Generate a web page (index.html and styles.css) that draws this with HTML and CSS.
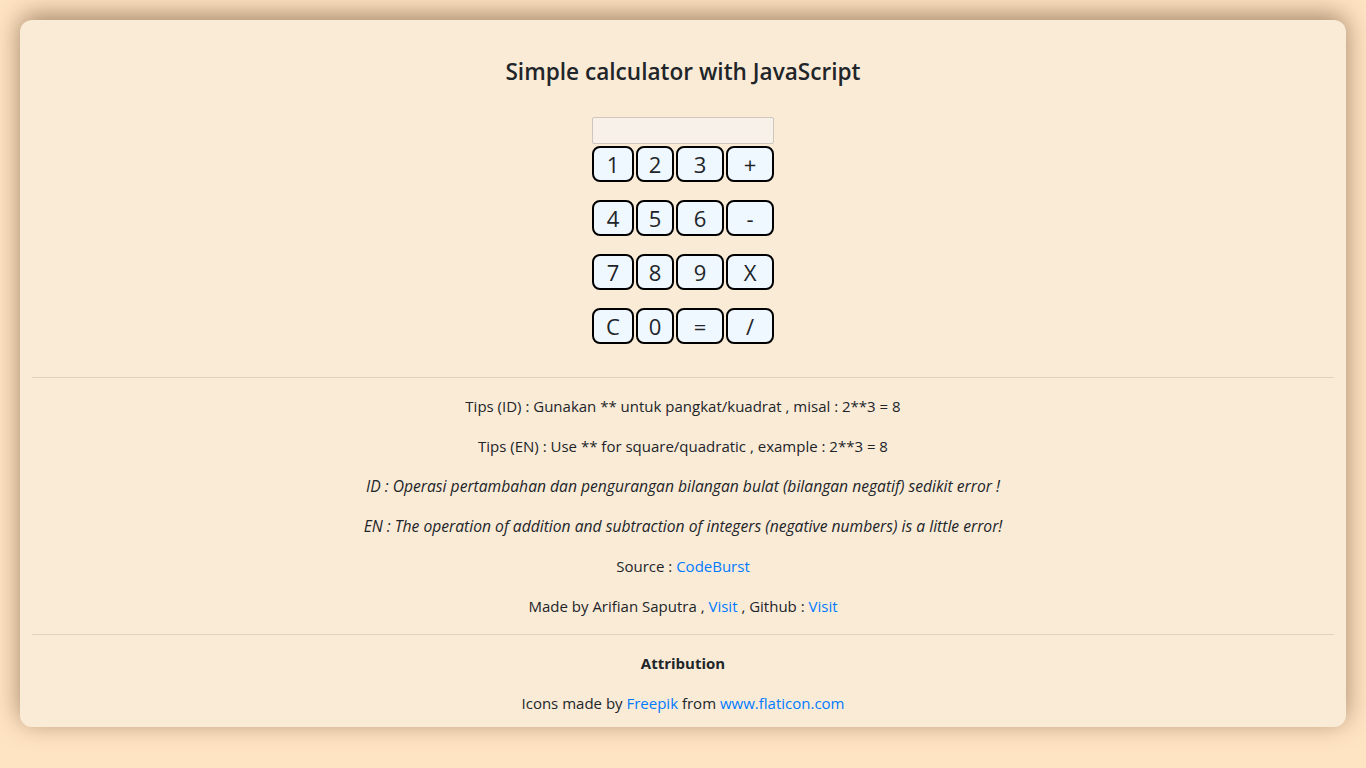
FILE: index.html
```html
<!DOCTYPE html>
<html lang="en">
<head>
<meta charset="utf-8">
<title>Simple calculator with JavaScript</title>
<link rel="stylesheet" href="styles.css">
</head>
<body>
<main class="card">
  <h1 class="title">Simple calculator with JavaScript</h1>
  <div class="calc">
    <input class="display" type="text">
    <div class="keys">
      <button class="key">1</button><button class="key">2</button><button class="key">3</button><button class="key">+</button>
      <button class="key">4</button><button class="key">5</button><button class="key">6</button><button class="key">-</button>
      <button class="key">7</button><button class="key">8</button><button class="key">9</button><button class="key">X</button>
      <button class="key">C</button><button class="key">0</button><button class="key">=</button><button class="key">/</button>
    </div>
  </div>
  <hr class="rule rule-top">
  <p class="line">Tips (ID) : Gunakan ** untuk pangkat/kuadrat , misal : 2**3 = 8</p>
  <p class="line">Tips (EN) : Use ** for square/quadratic , example : 2**3 = 8</p>
  <p class="line"><em class="note">ID : Operasi pertambahan dan pengurangan bilangan bulat (bilangan negatif) sedikit error !</em></p>
  <p class="line"><em class="note">EN : The operation of addition and subtraction of integers (negative numbers) is a little error!</em></p>
  <p class="line">Source : <a href="#">CodeBurst</a></p>
  <p class="line">Made by Arifian Saputra , <a href="#">Visit</a> , Github : <a href="#">Visit</a></p>
  <hr class="rule">
  <p class="line"><strong>Attribution</strong></p>
  <p class="line last">Icons made by <a href="#">Freepik</a> from <a href="#">www.flaticon.com</a></p>
</main>
</body>
</html>
```
FILE: styles.css
```css
html, body {
  margin: 0;
  padding: 0;
}
body {
  background: #ffe4c4;
  font-family: "Open Sans", "Noto Sans", sans-serif;
  font-size: 15px;
  line-height: 24px;
  color: #212529;
  padding: 20px;
  height: 768px;
  box-sizing: border-box;
}
.card {
  background: #faebd7;
  border-radius: 12px;
  padding: 12px 12px 12px;
  box-shadow: 0 -5px 26px rgba(70, 40, 10, 0.5);
  text-align: center;
}
.title {
  margin: 25px 0 0;
  font-size: 22.6px;
  line-height: 29px;
  font-weight: 600;
}
.calc {
  width: 182px;
  margin: 31px auto 0;
}
.display {
  display: block;
  width: 182px;
  height: 27px;
  box-sizing: border-box;
  margin: 0;
  padding: 0 4px;
  background: #f7f1ea;
  border: 1px solid #cfc6bc;
  border-radius: 2px;
}
.keys {
  display: grid;
  grid-template-columns: 42px 38px 48px 48px;
  grid-auto-rows: 36px;
  column-gap: 2px;
  row-gap: 18px;
  margin-top: 2px;
}
.key {
  margin: 0;
  padding: 0;
  background: #f0f8ff;
  border: 2px solid #000;
  border-radius: 8px;
  font-family: "Open Sans", "Noto Sans", sans-serif;
  font-size: 22px;
  line-height: 30px;
  color: #212529;
}
.rule {
  border: 0;
  border-top: 1px solid rgba(0, 0, 0, 0.1);
  margin: 0 0 16px;
}
.rule-top {
  margin-top: 33px;
}
.line {
  margin: 0 0 16px;
}
.line.last {
  margin-bottom: 0;
}
.note {
  font-size: 15.65px;
}
a {
  color: #007bff;
  text-decoration: none;
}
strong {
  font-weight: 700;
}
```
